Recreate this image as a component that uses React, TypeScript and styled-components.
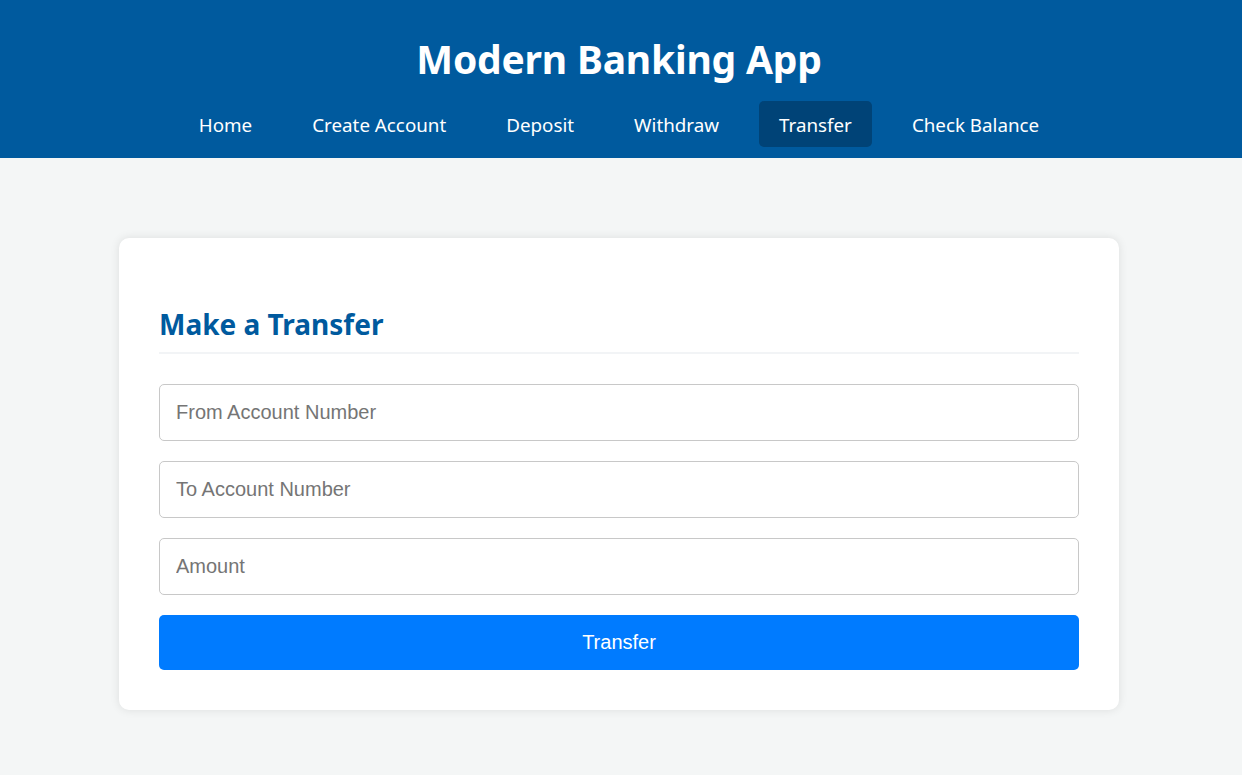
import React from 'react';
import styled, { createGlobalStyle } from 'styled-components';

const GlobalStyle = createGlobalStyle`
  html, body {
    margin: 0;
    padding: 0;
    background: #f4f6f6;
    font-family: "Noto Sans", "Open Sans", sans-serif;
  }
`;

const Header = styled.header`
  background: #005a9e;
  color: #fff;
  padding: 28px 4px 11px 0;
  display: flex;
  flex-direction: column;
  align-items: center;
`;

const Title = styled.h1`
  margin: 0 0 11px;
  font-size: 39px;
  line-height: 62px;
  font-weight: 700;
  letter-spacing: -0.2px;
`;

const Nav = styled.nav`
  display: flex;
  gap: 20px;
`;

const NavItem = styled.a<{ $active?: boolean }>`
  padding: 11px 20px 9px;
  font-size: 18.8px;
  line-height: 26px;
  color: #fff;
  text-decoration: none;
  border-radius: 5px;
  background: ${({ $active }) => ($active ? '#004377' : 'transparent')};
  cursor: pointer;
`;

const Main = styled.main`
  display: flex;
  justify-content: center;
  padding: 80px 4px 65px 0;
`;

const Card = styled.section`
  width: 1000px;
  box-sizing: border-box;
  background: #fff;
  border-radius: 10px;
  box-shadow: 0 0 10px rgba(0, 0, 0, 0.1);
  padding: 67px 40px 40px;
`;

const CardTitle = styled.h2`
  margin: 0 0 30px;
  padding-bottom: 9px;
  border-bottom: 2px solid #f2f4f6;
  color: #005a9e;
  font-size: 28px;
  line-height: 38px;
  font-weight: 700;
`;

const Form = styled.form`
  display: flex;
  flex-direction: column;
  gap: 20px;
`;

const Input = styled.input`
  height: 57px;
  box-sizing: border-box;
  padding: 0 16px;
  border: 1px solid #c8c8c8;
  border-radius: 5px;
  font-family: "Liberation Sans", Arial, sans-serif;
  font-size: 20px;
  color: #333;
  &::placeholder {
    color: #757575;
  }
`;

const Button = styled.button`
  height: 55px;
  border: none;
  border-radius: 5px;
  background: #007bff;
  color: #fff;
  font-family: "Liberation Sans", Arial, sans-serif;
  font-size: 20px;
  cursor: pointer;
`;

const links = ['Home', 'Create Account', 'Deposit', 'Withdraw', 'Transfer', 'Check Balance'];

export default function App() {
  return (
    <>
      <GlobalStyle />
      <Header>
        <Title>Modern Banking App</Title>
        <Nav>
          {links.map((l) => (
            <NavItem key={l} $active={l === 'Transfer'}>
              {l}
            </NavItem>
          ))}
        </Nav>
      </Header>
      <Main>
        <Card>
          <CardTitle>Make a Transfer</CardTitle>
          <Form onSubmit={(e) => e.preventDefault()}>
            <Input placeholder="From Account Number" />
            <Input placeholder="To Account Number" />
            <Input placeholder="Amount" />
            <Button type="submit">Transfer</Button>
          </Form>
        </Card>
      </Main>
    </>
  );
}
